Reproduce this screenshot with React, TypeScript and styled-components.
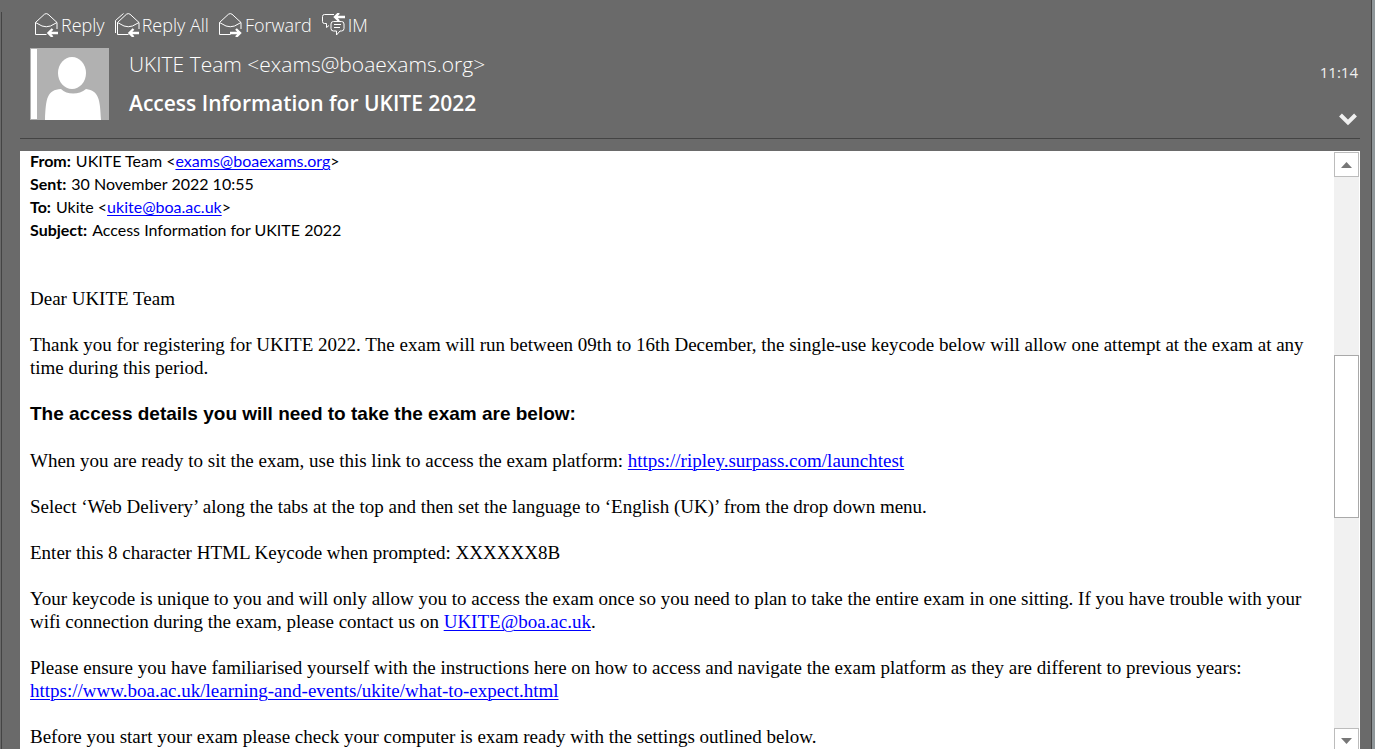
import React from "react";
import styled, { createGlobalStyle } from "styled-components";

const ui = `"Open Sans", "Noto Sans", sans-serif`;
const calibri = `Lato, "Open Sans", sans-serif`;
const serif = `"Liberation Serif", "Times New Roman", serif`;
const arial = `"Liberation Sans", Arial, sans-serif`;

const GlobalStyle = createGlobalStyle`
  *, *::before, *::after { box-sizing: border-box; }
  body { margin: 0; background: #6a6a6a; overflow: hidden; }
  p, h1, h2, dl, dd, dt { margin: 0; }
`;

const Window = styled.div`
  display: flex;
  height: 100vh;
  background: #6a6a6a;
`;

const LeftEdge = styled.div`
  flex: none;
  width: 1px;
  margin: 12px 18px 0 1px;
  background: #444444;
`;

const RightEdge = styled.div`
  flex: none;
  width: 4px;
  margin-left: 11px;
  border-left: 1px solid #444444;
  background: #8f9699;
`;

const Pane = styled.main`
  flex: 1;
  min-width: 0;
  display: flex;
  flex-direction: column;
`;

const Actions = styled.div`
  display: flex;
  gap: 10px;
  padding: 11px 0 0 15px;
`;

const Action = styled.button`
  display: flex;
  align-items: center;
  gap: 2px;
  height: 28px;
  padding: 0;
  border: 0;
  background: none;
  color: #ffffff;
  font: 300 18px/28px ${ui};
`;

const Header = styled.header`
  display: flex;
  margin-top: 9px;
  padding: 0 2px 0 10px;
  height: 90px;
`;

const Avatar = styled.svg`
  flex: none;
  width: 79px;
  height: 72px;
`;

const Titles = styled.div`
  flex: 1;
  min-width: 0;
  padding-left: 20px;
  color: #ffffff;
`;

const Sender = styled.p`
  color: #ffffff;
  font: 300 21px/32px ${ui};
`;

const Subject = styled.h1`
  margin-top: 8px;
  font: 600 21px/30px ${ui};
`;

const Meta = styled.div`
  display: flex;
  flex-direction: column;
  align-items: flex-end;
  justify-content: space-between;
  padding: 14px 0 11px;
`;

const Time = styled.time`
  color: #f0f0f0;
  font: 400 15px/20px ${ui};
`;

const Expand = styled.button`
  display: flex;
  padding: 0 1px;
  border: 0;
  background: none;
`;

const Sheet = styled.section`
  flex: 1;
  min-height: 0;
  display: flex;
  margin-top: 12px;
  background: #ffffff;
  overflow: hidden;
`;

const Rule = styled.hr`
  width: 100%;
  height: 1px;
  margin: 0;
  border: 0;
  background: #444444;
`;

const Message = styled.article`
  flex: 1;
  min-width: 0;
  margin-top: -2px;
  padding: 0 16px 0 10px;
  color: #000000;
  font: 19px/23px ${serif};
`;

const Link = styled.a`
  color: #0000ff;
  text-decoration: underline;
  text-underline-offset: 2px;
  text-decoration-thickness: 1px;
`;

const Envelope = styled.dl`
  margin-bottom: 46px;
  font: 16px/23px ${calibri};
`;

const Field = styled.div`
  display: flex;
  gap: 5px;
`;

const Label = styled.dt`
  font-weight: 700;
`;

const Para = styled.p`
  margin-bottom: 23px;
`;

const Lead = styled.h2`
  margin-bottom: 23px;
  font: 700 19px/24px ${arial};
`;

const Scrollbar = styled.div`
  flex: none;
  display: flex;
  flex-direction: column;
  width: 26px;
  height: calc(100% + 4px);
  padding: 1px 1px 0 0;
`;

const ScrollButton = styled.button`
  flex: none;
  display: flex;
  align-items: center;
  justify-content: center;
  height: 25px;
  padding: 0;
  border: 1px solid #bcbcbc;
  background: #ffffff;
`;

const Track = styled.div<{ $share: number }>`
  flex: ${(p) => p.$share} 0 0;
  background: #f1f1f1;
`;

const Thumb = styled(Track)`
  border: 1px solid #a9a9a9;
  background: #ffffff;
`;

const envelopeBody = "M0.5 9.5V21.5H11.5M22 9.5V16M0.5 9.5L9.5 1.2Q11.3 0 13 1.2L22 9.5M0.5 9.5L7 13Q11.3 14.5 15.5 13L22 9.5";

function ReplyIcon() {
  return (
    <svg width="24" height="24" viewBox="0 0 24 24" fill="none" stroke="#fff" aria-hidden="true">
      <path d={envelopeBody} />
      <path d="M23 20H14M17.5 16L13.5 20L17.5 24" strokeWidth="2.4" />
    </svg>
  );
}

function ReplyAllIcon() {
  return (
    <svg width="25" height="24" viewBox="0 0 25 24" fill="none" stroke="#fff" aria-hidden="true">
      <g transform="translate(2 0)">
        <path d={envelopeBody} />
        <path d="M22 20H13M16.5 16L12.5 20L16.5 24" strokeWidth="2.4" />
      </g>
      <path d="M0.5 20V7.5L8.5 0.5" />
    </svg>
  );
}

function ForwardIcon() {
  return (
    <svg width="24" height="24" viewBox="0 0 24 24" fill="none" stroke="#fff" aria-hidden="true">
      <path d={envelopeBody} />
      <path d="M11 20H21M17 16L21 20L17 24" strokeWidth="2.4" />
    </svg>
  );
}

function ChatIcon() {
  return (
    <svg width="24" height="24" viewBox="0 0 24 24" fill="none" stroke="#fff" aria-hidden="true">
      <path d="M12 1.5H2.5Q0.5 1.5 0.5 3.5V8.5Q0.5 10.5 2.5 10.5H4.5V14.5L7 12.5" />
      <path d="M11.5 8.5H19.5Q22 8.5 22 11V15.5Q22 18 19.5 18H18L14.5 22V18H11.5Q9 18 9 15.5V11Q9 8.5 11.5 8.5ZM12 11.5H19M12 14.5H18" />
      <path d="M23 4H13.5M17 0L13 4L17 8" strokeWidth="2.4" />
    </svg>
  );
}

export default function App() {
  return (
    <Window>
      <GlobalStyle />
      <LeftEdge />
      <Pane>
        <Actions>
          <Action><ReplyIcon />Reply</Action>
          <Action><ReplyAllIcon />Reply All</Action>
          <Action><ForwardIcon />Forward</Action>
          <Action><ChatIcon />IM</Action>
        </Actions>
        <Header>
          <Avatar viewBox="0 0 79 72" role="img" aria-label="UKITE Team">
            <rect width="79" height="72" fill="#b1b1b1" />
            <rect x="1" y="1" width="6" height="70" fill="#fff" />
            <ellipse cx="42" cy="25" rx="14" ry="16" fill="#fff" />
            <path d="M15 72C16 50 17 42 31 41C37 47 49 47 56 41C69 43 70 51 71 72Z" fill="#fff" />
          </Avatar>
          <Titles>
            <Sender>UKITE Team &lt;exams@boaexams.org&gt;</Sender>
            <Subject>Access Information for UKITE 2022</Subject>
          </Titles>
          <Meta>
            <Time>11:14</Time>
            <Expand aria-label="Show details">
              <svg width="18" height="14" viewBox="0 0 18 14" fill="none" stroke="#f0f0f0" strokeWidth="4" aria-hidden="true">
                <path d="M1.5 2L9 9.5L16.5 2" />
              </svg>
            </Expand>
          </Meta>
        </Header>
        <Rule />
        <Sheet>
          <Message>
            <Envelope>
              <Field><Label>From:</Label><dd>UKITE Team &lt;<Link href="mailto:exams@boaexams.org">exams@boaexams.org</Link>&gt;</dd></Field>
              <Field><Label>Sent:</Label><dd>30 November 2022 10:55</dd></Field>
              <Field><Label>To:</Label><dd>Ukite &lt;<Link href="mailto:ukite@boa.ac.uk">ukite@boa.ac.uk</Link>&gt;</dd></Field>
              <Field><Label>Subject:</Label><dd>Access Information for UKITE 2022</dd></Field>
            </Envelope>
            <Para>Dear UKITE Team</Para>
            <Para>Thank you for registering for UKITE 2022. The exam will run between 09th to 16th December, the single-use keycode below will allow one attempt at the exam at any time during this period.</Para>
            <Lead>The access details you will need to take the exam are below:</Lead>
            <Para>When you are ready to sit the exam, use this link to access the exam platform: <Link href="https://ripley.surpass.com/launchtest">https://ripley.surpass.com/launchtest</Link></Para>
            <Para>Select ‘Web Delivery’ along the tabs at the top and then set the language to ‘English (UK)’ from the drop down menu.</Para>
            <Para>Enter this 8 character HTML Keycode when prompted: XXXXXX8B</Para>
            <Para>Your keycode is unique to you and will only allow you to access the exam once so you need to plan to take the entire exam in one sitting. If you have trouble with your wifi connection during the exam, please contact us on <Link href="mailto:UKITE@boa.ac.uk">UKITE@boa.ac.uk</Link>.</Para>
            <Para>Please ensure you have familiarised yourself with the instructions here on how to access and navigate the exam platform as they are different to previous years:<br /><Link href="https://www.boa.ac.uk/learning-and-events/ukite/what-to-expect.html">https://www.boa.ac.uk/learning-and-events/ukite/what-to-expect.html</Link></Para>
            <Para>Before you start your exam please check your computer is exam ready with the settings outlined below.</Para>
          </Message>
          <Scrollbar>
            <ScrollButton aria-label="Scroll up">
              <svg width="11" height="6" viewBox="0 0 11 6" aria-hidden="true"><path d="M0 6L5.5 0L11 6Z" fill="#777" /></svg>
            </ScrollButton>
            <Track $share={178} />
            <Thumb $share={161} />
            <Track $share={210} />
            <ScrollButton aria-label="Scroll down">
              <svg width="11" height="6" viewBox="0 0 11 6" aria-hidden="true"><path d="M0 0L5.5 6L11 0Z" fill="#777" /></svg>
            </ScrollButton>
          </Scrollbar>
        </Sheet>
      </Pane>
      <RightEdge />
    </Window>
  );
}
